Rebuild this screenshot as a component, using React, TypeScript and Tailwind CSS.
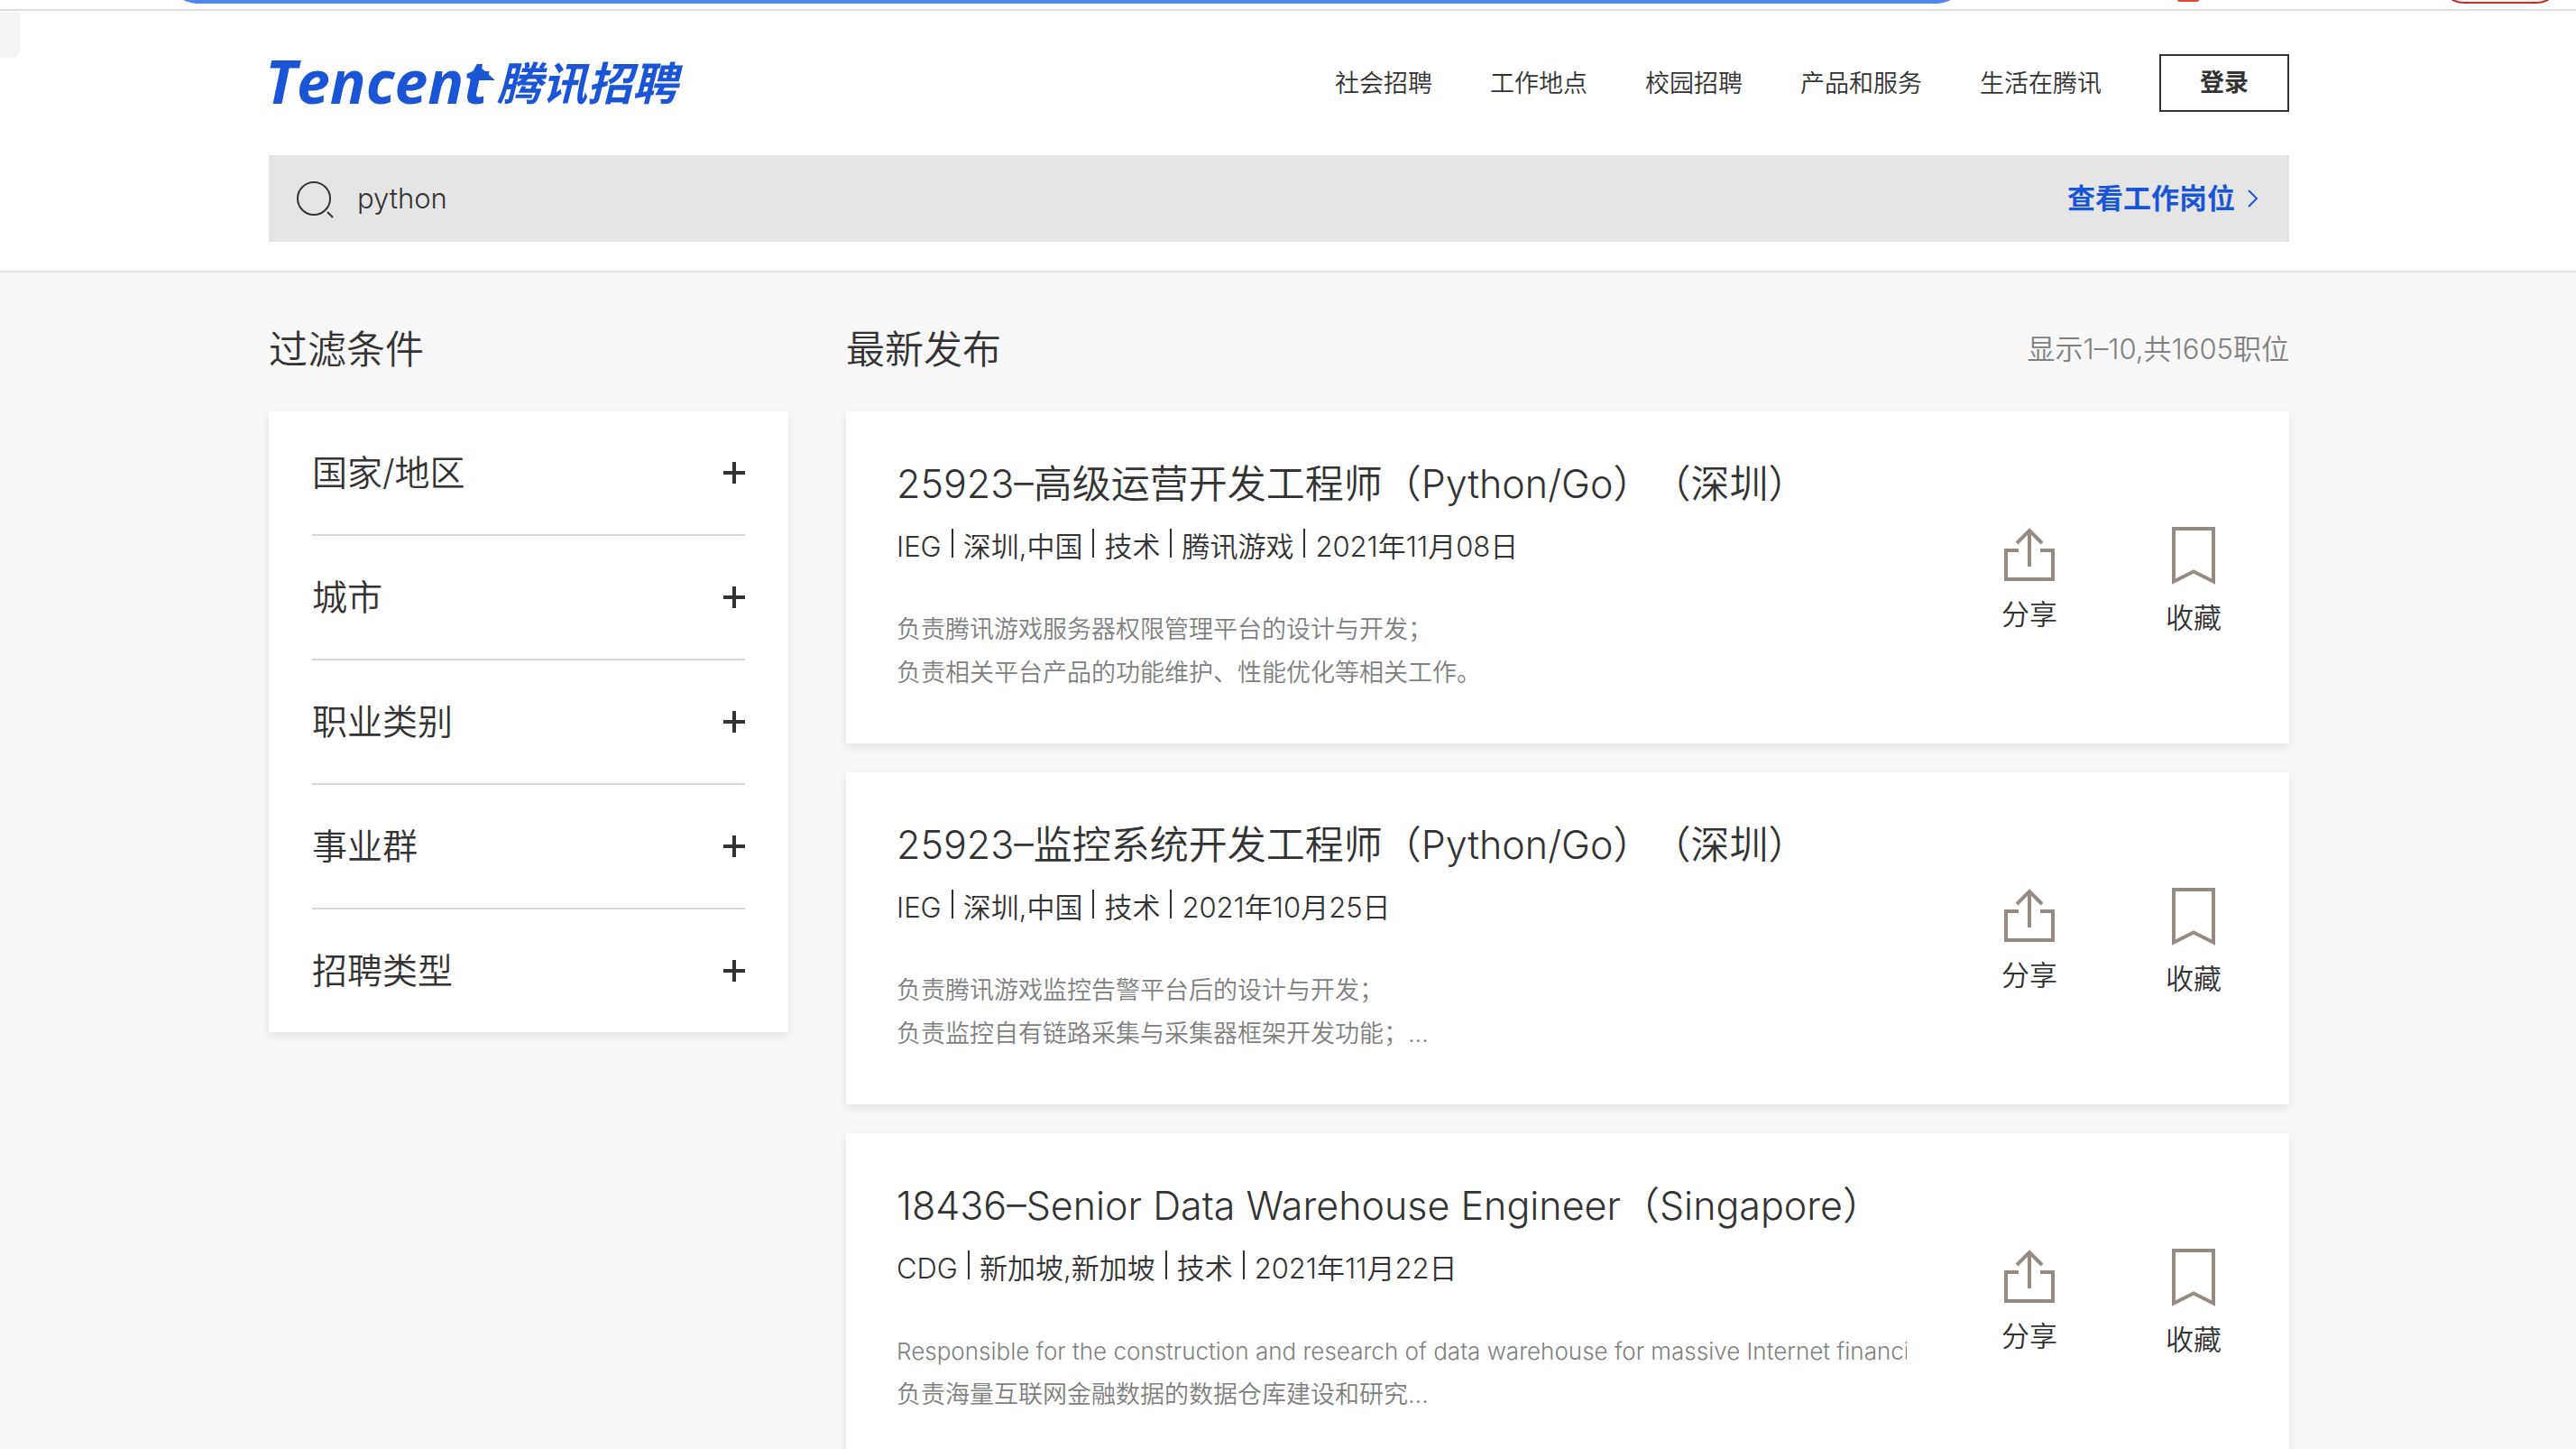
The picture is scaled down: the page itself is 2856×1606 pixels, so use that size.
import { useState } from "react";

type Job = {
  title: string;
  meta: string[];
  summary: string[];
};

const NAV_LINKS = ["社会招聘", "工作地点", "校园招聘", "产品和服务", "生活在腾讯"];

const FILTERS = ["国家/地区", "城市", "职业类别", "事业群", "招聘类型"];

const JOBS: Job[] = [
  {
    title: "25923–高级运营开发工程师（Python/Go）（深圳）",
    meta: ["IEG", "深圳,中国", "技术", "腾讯游戏", "2021年11月08日"],
    summary: [
      "负责腾讯游戏服务器权限管理平台的设计与开发；",
      "负责相关平台产品的功能维护、性能优化等相关工作。",
    ],
  },
  {
    title: "25923–监控系统开发工程师（Python/Go）（深圳）",
    meta: ["IEG", "深圳,中国", "技术", "2021年10月25日"],
    summary: ["负责腾讯游戏监控告警平台后的设计与开发；", "负责监控自有链路采集与采集器框架开发功能；…"],
  },
  {
    title: "18436–Senior Data Warehouse Engineer（Singapore）",
    meta: ["CDG", "新加坡,新加坡", "技术", "2021年11月22日"],
    summary: [
      "Responsible for the construction and research of data warehouse for massive Internet financial",
      "负责海量互联网金融数据的数据仓库建设和研究…",
    ],
  },
];

function Logo() {
  return (
    <svg
      viewBox="0 0 460 64"
      className="h-16 w-[460px] overflow-visible"
      fill="#1a55d6"
      role="img"
      aria-label="Tencent 腾讯招聘"
    >
      <text x="-4" y="55" className="font-['Open_Sans',sans-serif] text-[66px] font-bold italic">
        Tencent
      </text>
      <text x="253" y="51" className="font-['Noto_Sans_CJK_SC',sans-serif] text-[50px] font-bold italic">
        腾讯招聘
      </text>
      {/* arrow head on the last t */}
      <path d="M219 22h8l5-10 19 17h-27z" />
    </svg>
  );
}

function SearchIcon() {
  return (
    <svg viewBox="0 0 44 44" className="h-11 w-11" fill="none" stroke="#333" strokeWidth="2">
      <circle cx="20" cy="22" r="18" />
      <path d="M35 37l6 6" />
    </svg>
  );
}

function ChevronIcon() {
  return (
    <svg viewBox="0 0 12 20" className="h-5 w-3" fill="none" stroke="#1a55d6" strokeWidth="2">
      <path d="M1 1l9 9-9 9" />
    </svg>
  );
}

function PlusIcon() {
  return (
    <svg viewBox="0 0 24 24" className="h-6 w-6" fill="none" stroke="#333" strokeWidth="4">
      <path d="M12 0v24M0 12h24" />
    </svg>
  );
}

function ShareIcon() {
  return (
    <svg viewBox="0 0 60 60" className="h-[60px] w-[60px]" fill="none" stroke="#958b82" strokeWidth="4">
      <path d="M18 26H4v32h52V26H42M30 44V4M16 18L30 4l14 14" />
    </svg>
  );
}

function BookmarkIcon() {
  return (
    <svg viewBox="0 0 48 64" className="h-16 w-12" fill="none" stroke="#958b82" strokeWidth="4">
      <path d="M2 2h44v58.500L24 49.500 2 60.500z" />
    </svg>
  );
}

function BrowserEdge() {
  return (
    <div className="flex h-3 items-start border-b-2 border-[#ddd] bg-white pl-[190px] pr-4">
      <div className="flex h-1 flex-1 items-end overflow-hidden">
        <div className="h-14 w-full shrink-0 rounded-full bg-[#4e86ec]" />
      </div>
      <div className="ml-[238px] h-0.5 w-6 rounded-b-sm bg-[#e0443c]" />
      <div className="ml-[266px] flex h-1 w-[136px] items-end overflow-hidden">
        <div className="h-14 w-full shrink-0 rounded-full border-2 border-[#b8342a] bg-[#fbf0ef]" />
      </div>
    </div>
  );
}

function JobCard({ job }: { job: Job }) {
  return (
    <li className="flex justify-between bg-white pl-14 shadow-[0_4px_10px_rgba(0,0,0,0.08)]">
      <div className="w-[1120px] overflow-hidden whitespace-nowrap pb-[54px] pt-12">
        <h3 className="text-[43px] leading-[64px]">
          <a href="#job">{job.title}</a>
        </h3>
        <p className="flex items-center pt-3 text-[31px] leading-[52px]">
          {job.meta.map((item, i) => (
            <span key={i} className="flex items-center">
              {i > 0 && <span className="mx-[11px] mb-2 h-8 w-0.5 bg-[#333]" />}
              {item}
            </span>
          ))}
        </p>
        <div className="pt-[42px] leading-[48px] text-[#808080]">
          {job.summary.map((line) => (
            // latin copy runs a size smaller than the chinese
            <p key={line} className={/^\w/.test(line) ? "text-[26px]" : "text-[27px]"}>
              {line}
            </p>
          ))}
        </div>
      </div>
      <div className="flex items-start gap-[120px] pr-[75px] pt-32 text-[31px] leading-[46px]">
        <button className="flex flex-col items-center gap-[14px]">
          <ShareIcon />
          分享
        </button>
        <button className="flex flex-col items-center gap-[14px]">
          <BookmarkIcon />
          收藏
        </button>
      </div>
    </li>
  );
}

export default function App() {
  const [keyword, setKeyword] = useState("python");

  return (
    <div className="min-h-screen bg-[#f7f7f7] font-['Inter','Noto_Sans_CJK_SC',sans-serif] font-[350] text-[#333] [text-spacing-trim:space-all]">
      <BrowserEdge />
      <header className="relative border-b-2 border-[#e5e5e5] bg-white pr-5">
        <div className="absolute left-0 top-0.5 h-[50px] w-[22px] rounded-br-lg bg-[#f5f5f5]" />
        <div className="mx-auto max-w-[2240px] pb-8">
          <div className="flex h-40 items-center justify-between">
            <a href="#home">
              <Logo />
            </a>
            <nav className="flex items-center gap-16 text-[27px]">
              {NAV_LINKS.map((link) => (
                <a key={link} href="#nav" className="pt-0.5">
                  {link}
                </a>
              ))}
              <button className="h-16 w-36 border-2 border-[#333] font-bold">登录</button>
            </nav>
          </div>
          <div className="flex h-24 items-center bg-[#e5e5e5] pl-[30px] pr-[34px]">
            <SearchIcon />
            <input
              aria-label="搜索工作岗位"
              value={keyword}
              onChange={(e) => setKeyword(e.target.value)}
              className="flex-1 pl-6 text-[31px] outline-none"
            />
            <a href="#jobs" className="flex items-center gap-[14px] text-[31px] font-bold text-[#1a55d6]">
              查看工作岗位
              <ChevronIcon />
            </a>
          </div>
        </div>
      </header>

      <div className="pr-5">
        <div className="mx-auto flex max-w-[2240px] gap-16">
          <aside className="w-[576px]">
            <h2 className="pb-9 pt-[52px] text-[43px] leading-[66px]">过滤条件</h2>
            <ul className="bg-white px-12 shadow-[0_4px_10px_rgba(0,0,0,0.08)]">
              {FILTERS.map((name) => (
                <li key={name} className="border-b-2 border-[#d8d8d8] last:border-0">
                  <button className="flex h-[136px] w-full items-center justify-between text-[39px]">
                    {name}
                    <PlusIcon />
                  </button>
                </li>
              ))}
            </ul>
          </aside>
          <main className="flex-1">
            <div className="flex items-center justify-between pb-9 pt-[52px] leading-[66px]">
              <h2 className="text-[43px]">最新发布</h2>
              <p className="text-[31px] text-[#808080]">显示1–10,共1605职位</p>
            </div>
            <ul className="flex flex-col gap-8">
              {JOBS.map((job) => (
                <JobCard key={job.title} job={job} />
              ))}
            </ul>
          </main>
        </div>
      </div>
    </div>
  );
}
